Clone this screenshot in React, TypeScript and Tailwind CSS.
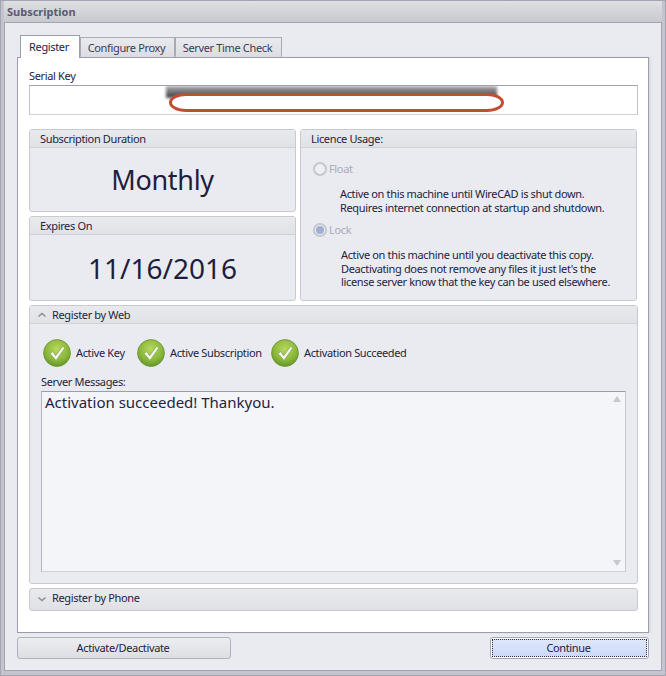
import React from "react";

const font = { fontFamily: '"Noto Sans", "DejaVu Sans", sans-serif' };

function Check() {
  return (
    <svg width="28" height="28" viewBox="0 0 30 30" className="shrink-0">
      <defs>
        <radialGradient id="cg" cx="50%" cy="35%" r="70%">
          <stop offset="0%" stopColor="#b9d75c" />
          <stop offset="60%" stopColor="#8ab83a" />
          <stop offset="100%" stopColor="#5e8f24" />
        </radialGradient>
      </defs>
      <circle cx="15" cy="15" r="14.4" fill="url(#cg)" stroke="#6b8f3a" strokeWidth="0.8" />
      <path d="M7.5 15.5 L10.5 13.5 L13.5 18 L21 8 L23.5 9.5 L14 23 Z" fill="#f4f8ec" stroke="#7d9c55" strokeWidth="0.7" strokeLinejoin="round" />
    </svg>
  );
}

function Panel({ title, className, children }: { title: string; className?: string; children: React.ReactNode }) {
  return (
    <div className={"flex flex-col rounded-[3px] border border-[#c8c9d2] bg-[#e9ebf0] " + (className ?? "")}>
      <div className="flex h-[18px] shrink-0 items-center border-b border-[#cfd0d8] bg-gradient-to-b from-[#e9eaed] to-[#e1e2e6] pl-[10px] pt-[1px] text-[11px] text-[#23233f]">
        {title}
      </div>
      {children}
    </div>
  );
}

function Radio({ on, label }: { on?: boolean; label: string }) {
  return (
    <div className="flex items-center gap-[2px] text-[11px] text-[#a9aabc]">
      <span className="flex h-[14px] w-[14px] items-center justify-center rounded-full border-2 border-[#c6c7cf] bg-[#eeeff2]">
        {on && <span className="h-[8px] w-[8px] rounded-full bg-[#9fb0d4]" />}
      </span>
      {label}
    </div>
  );
}

function Tab({ active, label, w }: { active?: boolean; label: string; w: string }) {
  return active ? (
    <div className={"relative z-10 mb-[-1px] flex h-[23px] items-center justify-center border border-b-0 border-[#9c9dac] bg-white pr-[2px] text-[11px] text-[#23233f] " + w}>
      {label}
    </div>
  ) : (
    <div className={"flex h-[20px] items-center justify-center border border-b-0 border-[#a9aab7] bg-gradient-to-b from-[#e9eaee] to-[#dcdde2] pr-[2px] pt-[1px] text-[11px] text-[#3b3b58] " + w}>
      {label}
    </div>
  );
}

export default function App() {
  return (
    <div style={font} className="flex h-[676px] w-[666px] flex-col border border-[#a4a5b3] bg-[#c4c5cc] px-[3px] pb-[4px] tracking-[-0.35px]">
      <div className="flex h-[21px] shrink-0 items-center bg-gradient-to-b from-[#dfe0e4] to-[#c8c9ce] pl-[3px] pt-[2px] text-[11px] font-bold tracking-normal text-[#5a5a70]">
        Subscription
      </div>
      <div className="flex min-h-0 flex-1 flex-col border border-[#a3a4b2] bg-[#e9ebf0] px-[12px] pt-[12px]">
        <div className="flex items-end pl-[3px]">
          <Tab active label="Register" w="w-[60px]" />
          <Tab label="Configure Proxy" w="w-[95px]" />
          <Tab label="Server Time Check" w="w-[107px]" />
        </div>
        <div className="flex h-[576px] w-[632px] flex-col border border-[#9c9dac] bg-white px-[11px] pt-[11px] shadow-[2px_0_2px_#dcdde2]">
          <div className="h-[16px] text-[11px] leading-[14px] text-[#23233f]">Serial Key</div>
          <div className="relative h-[30px] w-[609px] overflow-hidden border border-t-[#a0a1ae] border-l-[#c0c1cb] border-r-[#c0c1cb] border-b-[#d0d1d9] bg-white">
            <div className="absolute left-[136px] top-0 h-[12px] w-[331px] bg-gradient-to-b from-[#b0b0b4] to-[#3c3c40] blur-[1.5px]" />
            <div className="absolute left-[139px] top-[7px] h-[19px] w-[335px] rounded-[18px/10px] border-[3px] border-[#c14e33] bg-white" />
          </div>
          <div className="mt-[14px] flex gap-[4px]">
            <div className="flex w-[267px] flex-col gap-[4px]">
              <Panel title="Subscription Duration" className="h-[83px]">
                <div className="flex flex-1 items-center justify-center text-[27px] leading-none tracking-[-0.3px] text-[#1e1e3c]">Monthly</div>
              </Panel>
              <Panel title="Expires On" className="h-[85px]">
                <div className="flex flex-1 items-center justify-center text-[28px] leading-none tracking-[0px] text-[#1e1e3c]">11/16/2016</div>
              </Panel>
            </div>
            <Panel title="Licence Usage:" className="h-[172px] w-[337px]">
              <div className="flex flex-col pl-[12px] pt-[14px] text-[11px] leading-[13.5px] text-[#23233f]">
                <Radio label="Float" />
                <div className="mt-[11px] pl-[27px]">
                  Active on this machine until WireCAD is shut down.
                  <br />
                  Requires internet connection at startup and shutdown.
                </div>
                <div className="mt-[9px]"><Radio on label="Lock" /></div>
                <div className="mt-[11px] pl-[28px]">
                  Active on this machine until you deactivate this copy.
                  <br />
                  Deactivating does not remove any files it just let's the
                  <br />
                  license server know that the key can be used elsewhere.
                </div>
              </div>
            </Panel>
          </div>
          <div className="mt-[4px] flex h-[279px] w-[609px] flex-col rounded-[3px] border border-[#c8c9d2] bg-[#e9ebf0]">
            <div className="flex h-[18px] shrink-0 items-center gap-[5px] border-b border-[#cfd0d8] bg-gradient-to-b from-[#e9eaed] to-[#e1e2e6] pl-[7px] pt-[1px] text-[11px] text-[#23233f]">
              <svg width="10" height="10" viewBox="0 0 10 10"><path d="M1.5 6.5 L5 3.5 L8.5 6.5" fill="none" stroke="#8a8b98" strokeWidth="1.4" /></svg>
              Register by Web
            </div>
            <div className="flex flex-1 flex-col px-[11px]">
              <div className="ml-[2px] mt-[15px] flex h-[28px] items-center text-[11px] text-[#23233f]">
                <Check />
                <span className="ml-[5px] w-[61px]">Active Key</span>
                <Check />
                <span className="ml-[5px] w-[101px]">Active Subscription</span>
                <Check />
                <span className="ml-[5px]">Activation Succeeded</span>
              </div>
              <div className="mt-[8px] h-[16px] text-[11px] leading-[14px] text-[#23233f]">Server Messages:</div>
              <div className="relative h-[181px] w-[585px] border border-t-[#9c9dac] border-l-[#b4b5c0] border-r-[#c8c9d2] border-b-[#d0d1d9] bg-[#f4f5f8] pl-[3px] text-[15px] leading-[20px] tracking-normal text-[#23233f]">
                Activation succeeded! Thankyou.
                <svg className="absolute right-[4px] top-[4px]" width="8" height="6" viewBox="0 0 8 6"><path d="M4 0 L8 6 L0 6 Z" fill="#c6c7d0" /></svg>
                <svg className="absolute bottom-[5px] right-[4px]" width="8" height="6" viewBox="0 0 8 6"><path d="M0 0 L8 0 L4 6 Z" fill="#c6c7d0" /></svg>
              </div>
            </div>
          </div>
          <div className="mt-[4px] flex h-[23px] w-[609px] items-center gap-[5px] rounded-[3px] border border-[#c8c9d2] bg-gradient-to-b from-[#e9eaed] to-[#e0e1e5] pb-[2px] pl-[7px] text-[11px] text-[#23233f]">
            <svg width="10" height="10" viewBox="0 0 10 10"><path d="M1.5 3.5 L5 6.5 L8.5 3.5" fill="none" stroke="#8a8b98" strokeWidth="1.4" /></svg>
            Register by Phone
          </div>
        </div>
        <div className="mt-[4px] flex justify-between">
          <button className="flex h-[22px] w-[214px] items-center justify-center rounded-[3px] border border-[#b0b1bd] bg-gradient-to-b from-[#eceef0] to-[#dddee3] pr-[2px] text-[11px] text-[#23233f]">
            Activate/Deactivate
          </button>
          <button className="flex h-[22px] w-[159px] items-center justify-center rounded-[3px] border border-[#a6a7b5] bg-white p-px text-[11px] text-[#23233f]">
            <span className="flex h-full w-full items-center justify-center border border-dotted border-[#30304a] bg-gradient-to-b from-[#dfe7fb] to-[#ccd9fa] pr-[2px]">Continue</span>
          </button>
        </div>
      </div>
    </div>
  );
}
